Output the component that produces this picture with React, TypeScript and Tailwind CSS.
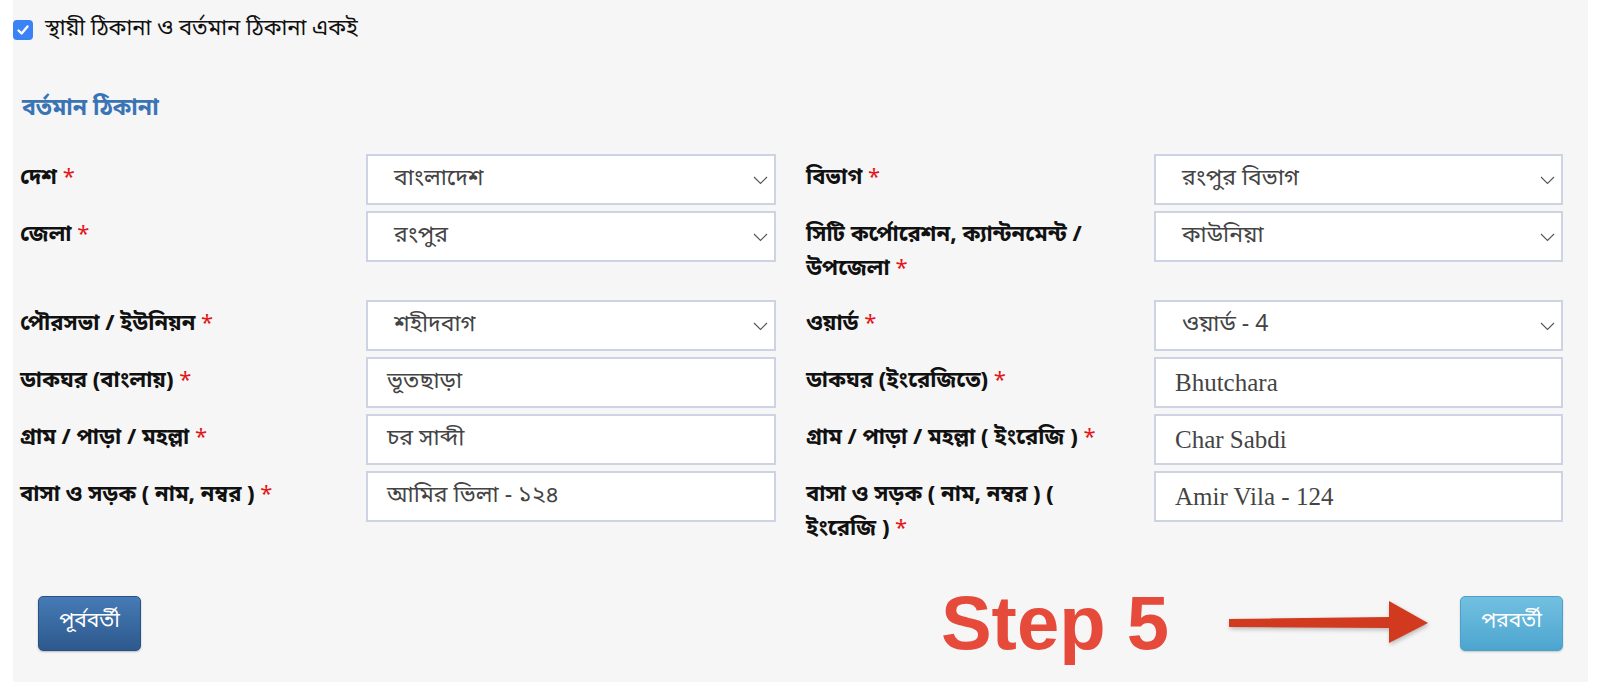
import React from "react";

type Field = { label: string[]; kind: "select" | "input"; value: string; en?: boolean };

const rows: [Field, Field][] = [
  [
    { label: ["দেশ"], kind: "select", value: "বাংলাদেশ" },
    { label: ["বিভাগ"], kind: "select", value: "রংপুর বিভাগ" },
  ],
  [
    { label: ["জেলা"], kind: "select", value: "রংপুর" },
    { label: ["সিটি কর্পোরেশন, ক্যান্টনমেন্ট /", "উপজেলা"], kind: "select", value: "কাউনিয়া" },
  ],
  [
    { label: ["পৌরসভা / ইউনিয়ন"], kind: "select", value: "শহীদবাগ" },
    { label: ["ওয়ার্ড"], kind: "select", value: "ওয়ার্ড - 4" },
  ],
  [
    { label: ["ডাকঘর (বাংলায়)"], kind: "input", value: "ভূতছাড়া" },
    { label: ["ডাকঘর (ইংরেজিতে)"], kind: "input", value: "Bhutchara", en: true },
  ],
  [
    { label: ["গ্রাম / পাড়া / মহল্লা"], kind: "input", value: "চর সাব্দী" },
    { label: ["গ্রাম / পাড়া / মহল্লা ( ইংরেজি )"], kind: "input", value: "Char Sabdi", en: true },
  ],
  [
    { label: ["বাসা ও সড়ক ( নাম, নম্বর )"], kind: "input", value: "আমির ভিলা - ১২৪" },
    { label: ["বাসা ও সড়ক ( নাম, নম্বর ) (", "ইংরেজি )"], kind: "input", value: "Amir Vila - 124", en: true },
  ],
];

function Label({ lines, extraPad }: { lines: string[]; extraPad?: boolean }) {
  return (
    <div
      className={`pt-[8px] pb-[7px] leading-[34px] text-[22px] font-bold text-[#111] ${extraPad ? "pl-[30px]" : ""}`}
    >
      {lines.map((l, i) => (
        <div key={i} className="whitespace-nowrap">
          {l}
          {i === lines.length - 1 && <span className="text-[#e3161b] font-normal"> *</span>}
        </div>
      ))}
    </div>
  );
}

function Control({ f }: { f: Field }) {
  const isSelect = f.kind === "select";
  return (
    <div
      className={`h-[51px] bg-white border-2 border-[#cdd3e2] flex items-center justify-between ${
        isSelect ? "pl-[26px] pr-[6px]" : "pl-[19px] pr-[6px]"
      }`}
    >
      <span
        className={
          f.en
            ? "font-['Liberation_Serif',serif] text-[25px] text-[#444]"
            : "text-[23px] text-[#444]"
        }
      >
        {f.value}
      </span>
      {isSelect && (
        <svg width="15" height="9" viewBox="0 0 15 9" className="mt-[2px]">
          <path d="M1 1 L7.5 7.5 L14 1" fill="none" stroke="#555" strokeWidth="1.1" />
        </svg>
      )}
    </div>
  );
}

export default function App() {
  return (
    <div className="w-[1600px] h-[694px] bg-white font-['Noto_Sans_Bengali','Lohit_Bengali','FreeSans','Noto_Sans',sans-serif]">
      <div className="ml-[13px] mr-[12px] h-[682px] bg-[#f6f6f6] flex flex-col">
        {/* checkbox row */}
        <div className="mt-[20px] flex items-center h-[20px]">
          <span className="w-[20px] h-[20px] rounded-[4px] bg-[#3b82f6] flex items-center justify-center shrink-0">
            <svg width="14" height="14" viewBox="0 0 14 14">
              <path d="M2.5 7.5 L5.6 10.5 L11.5 3.5" fill="none" stroke="white" strokeWidth="2.4" strokeLinecap="round" strokeLinejoin="round" />
            </svg>
          </span>
          <span className="ml-[12px] text-[22px] text-[#111] leading-[20px] whitespace-nowrap">
            স্থায়ী ঠিকানা ও বর্তমান ঠিকানা একই
          </span>
        </div>

        {/* heading */}
        <div className="mt-[54px] pl-[9px] h-[30px] leading-[30px] text-[23px] font-bold text-[#3a74b4]">
          বর্তমান ঠিকানা
        </div>

        {/* form */}
        <div className="mt-[30px] pl-[7px] flex flex-col gap-[6px]">
          {rows.map(([l, r], i) => (
            <div key={i} className="grid grid-cols-[346px_410px_378px_409px] items-start">
              <Label lines={l.label} />
              <Control f={l} />
              <Label lines={r.label} extraPad />
              <Control f={r} />
            </div>
          ))}
        </div>

        {/* buttons */}
        <div className="mt-[31px] pl-[25px] pr-[25px] flex items-center">
          <button className="w-[103px] h-[55px] rounded-[5px] border border-[#2a5183] bg-gradient-to-b from-[#467bb6] to-[#2d598d] text-white text-[21px] shadow-[0_1px_2px_rgba(0,0,0,0.25)]">
            পূর্ববর্তী
          </button>
          <div className="flex-1" />
          <span className="font-['Liberation_Sans',Arial,sans-serif] font-bold text-[76px] leading-[76px] text-[#e64a3a]">
            Step 5
          </span>
          <svg width="205" height="48" viewBox="0 0 205 48" className="ml-[60px] mt-[4px] drop-shadow-[1px_2px_2px_rgba(0,0,0,0.25)]">
            <polygon points="0,18 160,16 160,0 199,22 160,42 160,27 0,26" fill="#d13a1f" />
          </svg>
          <div className="w-[26px]" />
          <button className="w-[103px] h-[55px] rounded-[5px] border border-[#4aa2ca] bg-gradient-to-b from-[#72c0e1] to-[#4ca5cf] text-white text-[21px] shadow-[0_1px_2px_rgba(0,0,0,0.2)]">
            পরবর্তী
          </button>
        </div>
      </div>
    </div>
  );
}
